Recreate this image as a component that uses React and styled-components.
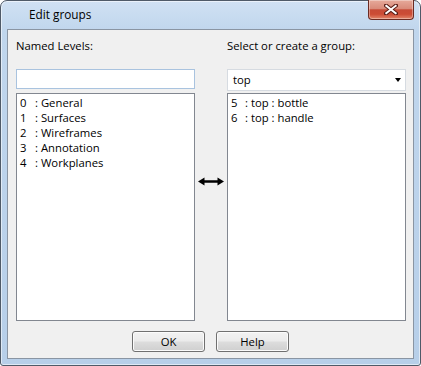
import React from 'react';
import styled, { createGlobalStyle } from 'styled-components';

const GlobalStyle = createGlobalStyle`
  html, body {
    margin: 0;
    padding: 0;
    background: #ffffff;
  }
  * {
    box-sizing: border-box;
  }
`;

const uiFont = `"Open Sans", "Noto Sans", sans-serif`;

/** outer aero frame **/
const Window = styled.div`
  width: 421px;
  height: 366px;
  border: 1px solid #4f5a68;
  border-radius: 7px 7px 3px 3px;
  background: linear-gradient(#d0e1f3 0px, #c0d6ed 30px, #b7cfe9 100%);
  box-shadow: inset 0 0 0 1px rgba(255, 255, 255, 0.55);
  padding: 0 6px 6px 6px;
  display: flex;
  flex-direction: column;
  font-family: ${uiFont};
  font-size: 11.3px;
  color: #000;
`;

const TitleBar = styled.div`
  height: 28px;
  display: flex;
  justify-content: space-between;
  align-items: flex-start;
`;

const Title = styled.div`
  padding: 5px 0 0 22px;
  line-height: 16px;
  font-size: 11.8px;
`;

const CloseButton = styled.div`
  width: 46px;
  height: 20px;
  margin-top: -1px;
  border: 1px solid #6b2b22;
  border-top: none;
  border-radius: 0 0 4px 4px;
  background: linear-gradient(
    #e6aa9b 0%,
    #d98b7a 45%,
    #c74a36 52%,
    #cc4c35 75%,
    #e2866a 100%
  );
  box-shadow: inset 0 0 0 1px rgba(255, 255, 255, 0.35);
  display: flex;
  align-items: center;
  justify-content: center;
`;

/** client area of the dialog **/
const Client = styled.div`
  flex: 1;
  border: 1px solid #8a95a3;
  background: #f0f0f0;
  padding: 8px 6px 0 8px;
  display: flex;
  flex-direction: column;
`;

const Columns = styled.div`
  display: grid;
  grid-template-columns: 179px 32px 179px;
`;

const Column = styled.div`
  display: flex;
  flex-direction: column;
`;

const Label = styled.div`
  line-height: 15px;
  height: 15px;
  margin-bottom: 16px;
`;

const TextInput = styled.div`
  height: 20px;
  border: 1px solid #a9c3df;
  background: #fff;
`;

const Combo = styled.div`
  height: 22px;
  border: 1px solid #d6dbe1;
  background: #fff;
  padding-left: 5px;
  line-height: 20px;
  display: flex;
  justify-content: space-between;
  align-items: center;
`;

const DropArrow = styled.div`
  width: 0;
  height: 0;
  margin-right: 4px;
  border-left: 3.5px solid transparent;
  border-right: 3.5px solid transparent;
  border-top: 4px solid #000;
`;

const List = styled.div`
  height: 228px;
  margin-top: ${props => props.gap}px;
  border: 1px solid #828790;
  background: #fff;
  padding: 1px 0 0 ${props => props.indent}px;
`;

const Row = styled.div`
  line-height: 15px;
  height: 15px;
  white-space: nowrap;
`;

const Num = styled.span`
  display: inline-block;
  width: ${props => props.w}px;
`;

const Middle = styled.div`
  display: flex;
  justify-content: center;
  padding-top: 139px;
`;

const ButtonRow = styled.div`
  display: flex;
  justify-content: center;
  gap: 11px;
  margin-top: 10px;
  padding-right: 2px;
`;

const Button = styled.div`
  width: 73px;
  height: 21px;
  border: 1px solid #707070;
  border-radius: 3px;
  background: linear-gradient(#f2f2f2 0%, #ebebeb 48%, #dddddd 52%, #cfcfcf 100%);
  box-shadow: inset 0 0 0 1px #fbfbfb;
  text-align: center;
  line-height: 19px;
`;

const levels = [
  ['0', 'General'],
  ['1', 'Surfaces'],
  ['2', 'Wireframes'],
  ['3', 'Annotation'],
  ['4', 'Workplanes']
];

const groups = [
  ['5', 'top : bottle'],
  ['6', 'top : handle']
];

const CloseGlyph = () => (
  <svg width="14" height="11" viewBox="0 0 14 11">
    <path d="M2 1.5 L12 9.5 M12 1.5 L2 9.5" stroke="#5a1d16" strokeWidth="4" strokeLinecap="square" />
    <path d="M2.3 1.8 L11.7 9.2 M11.7 1.8 L2.3 9.2" stroke="#ffffff" strokeWidth="2" strokeLinecap="square" />
  </svg>
);

const SwapArrow = () => (
  <svg width="26" height="9" viewBox="0 0 26 9">
    <path
      d="M0 4.5 L6.5 0.5 L6.5 3.3 L19.5 3.3 L19.5 0.5 L26 4.5 L19.5 8.5 L19.5 5.7 L6.5 5.7 L6.5 8.5 Z"
      fill="#000"
    />
  </svg>
);

export default function App() {
  return (
    <>
      <GlobalStyle />
      <Window>
        <TitleBar>
          <Title>Edit groups</Title>
          <CloseButton>
            <CloseGlyph />
          </CloseButton>
        </TitleBar>
        <Client>
          <Columns>
            <Column>
              <Label>Named Levels:</Label>
              <TextInput />
              <List gap={4} indent={3}>
                {levels.map(([n, name]) => (
                  <Row key={n}>
                    <Num w={15}>{n}</Num>: {name}
                  </Row>
                ))}
              </List>
            </Column>
            <Middle>
              <SwapArrow />
            </Middle>
            <Column>
              <Label>Select or create a group:</Label>
              <Combo>
                top
                <DropArrow />
              </Combo>
              <List gap={2} indent={3}>
                {groups.map(([n, name]) => (
                  <Row key={n}>
                    <Num w={14}>{n}</Num>: {name}
                  </Row>
                ))}
              </List>
            </Column>
          </Columns>
          <ButtonRow>
            <Button>OK</Button>
            <Button>Help</Button>
          </ButtonRow>
        </Client>
      </Window>
    </>
  );
}
